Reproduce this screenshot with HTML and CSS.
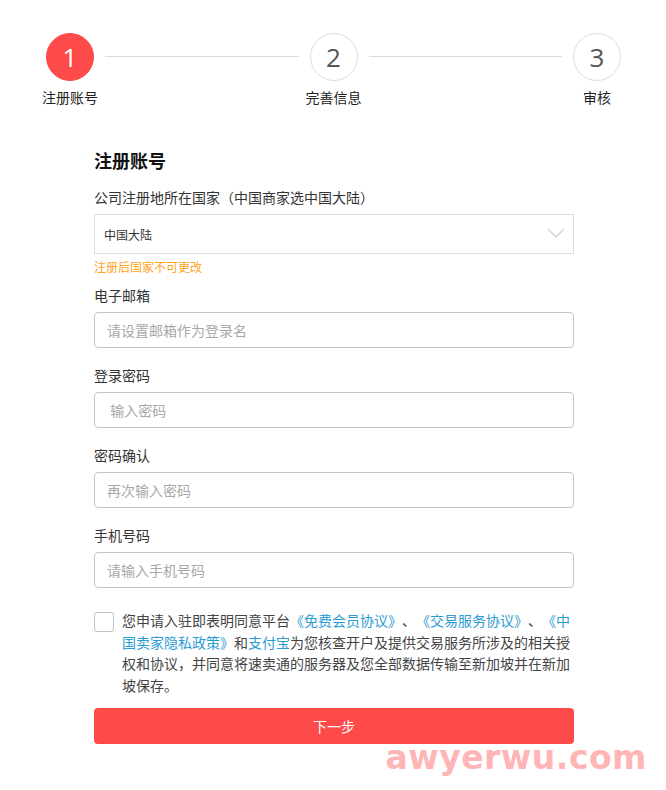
FILE: index.html
```html
<!DOCTYPE html>
<html lang="zh-CN">
<head>
  <meta charset="UTF-8">
  <title>注册账号</title>
  <link rel="stylesheet" href="styles.css">
</head>
<body>
  <div class="steps">
    <div class="step active">
      <div class="step-circle">1</div>
      <div class="step-label">注册账号</div>
    </div>
    <div class="step-line"></div>
    <div class="step">
      <div class="step-circle">2</div>
      <div class="step-label">完善信息</div>
    </div>
    <div class="step-line"></div>
    <div class="step">
      <div class="step-circle">3</div>
      <div class="step-label">审核</div>
    </div>
  </div>

  <form class="register-form">
    <h2 class="form-title">注册账号</h2>

    <label class="field-label">公司注册地所在国家（中国商家选中国大陆）</label>
    <div class="select-box">
      <span>中国大陆</span>
      <svg class="select-arrow" width="18" height="10" viewBox="0 0 18 10">
        <polyline points="1,1 9,9 17,1" fill="none" stroke="#cfcfcf" stroke-width="1.3"/>
      </svg>
    </div>
    <div class="field-hint">注册后国家不可更改</div>

    <label class="field-label first">电子邮箱</label>
    <input class="text-input" type="text" placeholder="请设置邮箱作为登录名">

    <label class="field-label">登录密码</label>
    <input class="text-input" type="password" placeholder=" 输入密码">

    <label class="field-label">密码确认</label>
    <input class="text-input" type="password" placeholder="再次输入密码">

    <label class="field-label">手机号码</label>
    <input class="text-input" type="text" placeholder="请输入手机号码">

    <div class="agreement">
      <span class="checkbox"></span>
      <p class="agreement-text">您申请入驻即表明同意平台<a href="#">《免费会员协议》</a>、<a href="#">《交易服务协议》</a>、<a href="#">《中国卖家隐私政策》</a>和<a href="#">支付宝</a>为您核查开户及提供交易服务所涉及的相关授权和协议，并同意将速卖通的服务器及您全部数据传输至新加坡并在新加坡保存。</p>
    </div>

    <button type="button" class="next-btn">下一步</button>
  </form>

  <div class="watermark">awyerwu.com</div>
</body>
</html>
```

FILE: styles.css
```css
body {
  margin: 0;
  background: #fff;
  color: #333;
  font-family: "Noto Sans CJK SC", "Noto Sans", sans-serif;
  font-size: 14px;
  text-spacing-trim: space-all;
  position: relative;
  min-height: 790px;
}
.steps {
  display: flex;
  align-items: flex-start;
  width: 597px;
  padding: 33px 0 0 35px;
}
.step {
  width: 70px;
  display: flex;
  flex-direction: column;
  align-items: center;
}
.step-circle {
  width: 48px;
  height: 48px;
  box-sizing: border-box;
  border: 1px solid #ddd;
  border-radius: 50%;
  display: flex;
  align-items: center;
  justify-content: center;
  font-family: "Open Sans", sans-serif;
  font-size: 26px;
  color: #555;
  background: #fff;
}
.step.active .step-circle {
  background: #ff4a4a;
  border-color: #ff4a4a;
  color: #fff;
}
.step-label {
  margin-top: 6px;
  line-height: 20px;
  font-size: 14px;
  color: #222;
  white-space: nowrap;
}
.step-line {
  flex: 1;
  height: 1px;
  background: #dcdcdc;
  margin-top: 23px;
}
.register-form {
  width: 480px;
  margin: 0 0 0 94px;
}
.form-title {
  margin: 41px 0 0;
  font-size: 18px;
  line-height: 24px;
  font-weight: bold;
  color: #111;
}
.field-label {
  display: block;
  margin-top: 17px;
  line-height: 20px;
  font-size: 14px;
  color: #333;
}
.form-title + .field-label {
  margin-top: 15px;
}
.field-label.first {
  margin-top: 9px;
}
.select-box {
  margin-top: 7px;
  height: 40px;
  box-sizing: border-box;
  border: 1px solid #dedede;
  display: flex;
  align-items: center;
  justify-content: space-between;
  padding: 0 8px 0 9px;
  font-size: 12px;
  color: #333;
}
.select-arrow {
  display: block;
  margin-top: -2px;
}
.field-hint {
  margin-top: 4px;
  line-height: 18px;
  font-size: 12px;
  color: #ffa31a;
}
.text-input {
  display: block;
  width: 100%;
  height: 36px;
  margin-top: 7px;
  box-sizing: border-box;
  border: 1px solid #c3c5cc;
  border-radius: 4px;
  padding: 0 12px;
  font-family: inherit;
  font-size: 14px;
  color: #333;
  outline: none;
}
.text-input::placeholder {
  color: #a8a8a8;
}
.agreement {
  display: flex;
  gap: 8px;
  margin-top: 22px;
}
.checkbox {
  flex: none;
  width: 20px;
  height: 20px;
  box-sizing: border-box;
  border: 1px solid #bfc1c8;
  border-radius: 3px;
  margin-top: 2px;
}
.agreement-text {
  margin: 0;
  width: 452px;
  line-height: 21.5px;
  font-size: 14px;
  color: #444;
}
.agreement-text a {
  color: #2b9bd3;
  text-decoration: none;
}
.next-btn {
  display: block;
  width: 100%;
  height: 36px;
  margin-top: 12px;
  border: none;
  border-radius: 4px;
  background: #ff4a4a;
  color: #fff;
  font-family: inherit;
  font-size: 14px;
  cursor: pointer;
}
.watermark {
  position: absolute;
  right: 19px;
  top: 738px;
  font-family: "DejaVu Sans", sans-serif;
  font-weight: bold;
  font-size: 33px;
  letter-spacing: 0.5px;
  color: #ffb5b5;
}
```
